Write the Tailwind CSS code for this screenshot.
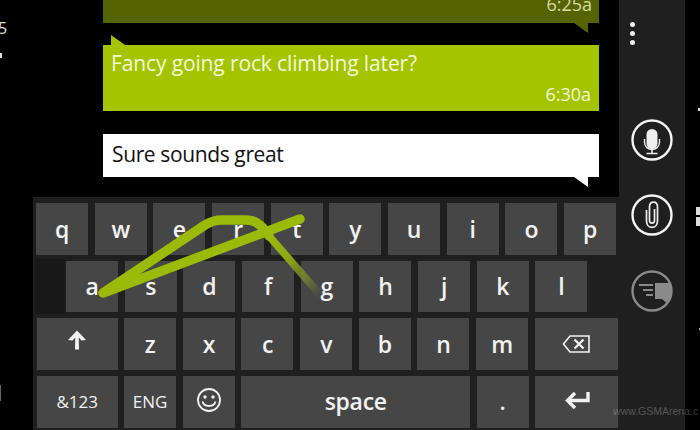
<!DOCTYPE html>
<html lang="en">
<head>
  <meta charset="UTF-8">
  <title>Messaging keyboard</title>
  <script src="https://cdn.jsdelivr.net/npm/@tailwindcss/browser@4"></script>
</head>
<body class="bg-black">
  <div class="relative flex w-[700px] h-[430px] overflow-hidden bg-black text-white font-['Open_Sans',sans-serif]">

    <!-- conversation and keyboard -->
    <div class="flex flex-col w-[619px]">
      <div class="flex flex-col h-[197px] pl-[103px] pr-[20px]">
        <div class="flex justify-end items-end h-[23px] px-[7px] pb-[10px] bg-[#556400] text-[#d5daa8] text-[18px] leading-[17px]">6:25a</div>
        <svg class="block shrink-0 self-start ml-[471px]" width="14" height="10"><polygon points="0,0 14,10 14,0" fill="#556400"/></svg>
        <svg class="block shrink-0 mt-[2px] ml-[8px]" width="14" height="10"><polygon points="0,0 0,10 14,10" fill="#a4c400"/></svg>
        <div class="flex flex-col justify-between h-[66px] px-[8px] pt-[3px] pb-[7px] bg-[#a4c400] text-[#f3f7dc]">
          <div class="text-[21px] leading-[30px] tracking-[-0.13px]">Fancy going rock climbing later?</div>
          <div class="text-right text-[18px] leading-[20px]">6:30a</div>
        </div>
        <div class="flex items-center h-[43px] mt-[23px] px-[9px] pb-[4px] bg-white text-[#111] text-[21px] leading-[30px] tracking-[-0.38px]">Sure sounds great</div>
        <svg class="block shrink-0 ml-[471px]" width="14" height="10"><polygon points="0,0 14,10 14,0" fill="#fff"/></svg>
      </div>

      <div class="flex flex-col gap-[6px] h-[233px] ml-[33px] pt-[6px] bg-[#1f1f1f] text-[23px] font-semibold tracking-[-0.3px] text-[#f2f2f2]">
        <div class="flex gap-[6.67px] pl-[3px] h-[51.5px]">
          <div class="flex items-center justify-center w-[52px] bg-[#464646]">q</div>
          <div class="flex items-center justify-center w-[52px] bg-[#464646]">w</div>
          <div class="flex items-center justify-center w-[52px] bg-[#464646]">e</div>
          <div class="flex items-center justify-center w-[52px] bg-[#464646]">r</div>
          <div class="flex items-center justify-center w-[52px] bg-[#464646]">t</div>
          <div class="flex items-center justify-center w-[52px] bg-[#464646]">y</div>
          <div class="flex items-center justify-center w-[52px] bg-[#464646]">u</div>
          <div class="flex items-center justify-center w-[52px] bg-[#464646]">i</div>
          <div class="flex items-center justify-center w-[52px] bg-[#464646]">o</div>
          <div class="flex items-center justify-center w-[52px] bg-[#464646]">p</div>
        </div>
        <div class="flex gap-[6.67px] pl-[2px] h-[51.5px]">
          <div class="w-[30px] -my-[2px] -mr-[5.67px] bg-[#181818]"></div>
          <div class="flex items-center justify-center w-[52px] bg-[#464646]">a</div>
          <div class="flex items-center justify-center w-[52px] bg-[#464646]">s</div>
          <div class="flex items-center justify-center w-[52px] bg-[#464646]">d</div>
          <div class="flex items-center justify-center w-[52px] bg-[#464646]">f</div>
          <div class="flex items-center justify-center w-[52px] bg-[#464646]">g</div>
          <div class="flex items-center justify-center w-[52px] bg-[#464646]">h</div>
          <div class="flex items-center justify-center w-[52px] bg-[#464646]">j</div>
          <div class="flex items-center justify-center w-[52px] bg-[#464646]">k</div>
          <div class="flex items-center justify-center w-[52px] bg-[#464646]">l</div>
        </div>
        <div class="flex gap-[6.67px] pl-[4px] h-[51.5px]">
          <div class="flex items-center justify-center w-[80.5px] bg-[#464646]">
            <svg class="-mt-[8px]" width="20" height="20" viewBox="0 0 20 20"><path d="M10 .5 L19 10 L14.5 10.5 L11.8 7.5 L12 19.5 L8 19.5 L8.2 7.5 L5.5 10.5 L1 10 Z" fill="#f2f2f2"/></svg>
          </div>
          <div class="flex items-center justify-center w-[52px] bg-[#464646]">z</div>
          <div class="flex items-center justify-center w-[52px] bg-[#464646]">x</div>
          <div class="flex items-center justify-center w-[52px] bg-[#464646]">c</div>
          <div class="flex items-center justify-center w-[52px] bg-[#464646]">v</div>
          <div class="flex items-center justify-center w-[52px] bg-[#464646]">b</div>
          <div class="flex items-center justify-center w-[52px] bg-[#464646]">n</div>
          <div class="flex items-center justify-center w-[52px] bg-[#464646]">m</div>
          <div class="flex items-center justify-center w-[83px] bg-[#464646]">
            <svg width="28" height="20" viewBox="0 0 28 20" fill="none" stroke="#f2f2f2"><path d="M8 2 H27 V18 H8 L1.5 10 Z" stroke-width="1.6"/><path d="M12.5 5.5 L21.5 14.5 M21.5 5.5 L12.5 14.5" stroke-width="2.2"/></svg>
          </div>
        </div>
        <div class="flex gap-[6.67px] pl-[4px] h-[52px]">
          <div class="flex items-center justify-center w-[80.5px] bg-[#464646] text-[17px] font-medium tracking-normal">&amp;123</div>
          <div class="flex items-center justify-center w-[52px] bg-[#464646] text-[17px] font-medium tracking-normal">ENG</div>
          <div class="flex items-center justify-center w-[52px] bg-[#464646]">
            <svg class="-mt-[4px]" width="26" height="26" viewBox="0 0 26 26" fill="none" stroke="#f2f2f2" stroke-width="1.8"><circle cx="13" cy="13" r="11"/><circle cx="9" cy="10" r="1.7" fill="#f2f2f2" stroke="none"/><circle cx="17" cy="10" r="1.7" fill="#f2f2f2" stroke="none"/><path d="M6.5 14.5 C8 20.5 18 20.5 19.5 14.5"/></svg>
          </div>
          <div class="flex items-center justify-center w-[228.5px] bg-[#464646]">space</div>
          <div class="flex items-center justify-center w-[52px] bg-[#464646]">.</div>
          <div class="flex items-center justify-center w-[83px] bg-[#464646]">
            <svg class="-mt-[4px]" width="26" height="20" viewBox="0 0 26 20" fill="none" stroke="#f2f2f2" stroke-width="3.4"><path d="M24 2 V10.5 H5"/><path d="M11 3 L3.5 10.5 L11 18"/></svg>
          </div>
        </div>
      </div>
    </div>

    <!-- side actions -->
    <div class="flex flex-col items-center w-[66px] bg-[#1f1f1f]">
      <div class="flex flex-col gap-[4px] self-start ml-[11px] mt-[22px]">
        <div class="size-[5px] rounded-full bg-[#eee]"></div>
        <div class="size-[5px] rounded-full bg-[#eee]"></div>
        <div class="size-[5px] rounded-full bg-[#eee]"></div>
      </div>
      <svg class="mt-[74px]" width="42" height="42" viewBox="0 0 42 42" fill="none">
        <circle cx="21" cy="21" r="19.5" stroke="#f5f5f5" stroke-width="2.4"/>
        <rect x="15.5" y="10" width="11" height="20" rx="5.5" fill="#eee"/>
        <path d="M13.5 20 V23 C13.5 33 28.5 33 28.5 23 V20" stroke="#eee" stroke-width="1.4"/>
        <path d="M21 31 V34 M15.5 34.5 H26.5" stroke="#eee" stroke-width="1.6"/>
      </svg>
      <svg class="mt-[33px]" width="42" height="42" viewBox="0 0 42 42" fill="none">
        <circle cx="21" cy="21" r="19.5" stroke="#f5f5f5" stroke-width="2.4"/>
        <path d="M15.5 16 V27 C15.5 35.5 26.5 35.5 26.5 27 V13 C26.5 6.5 18.5 6.5 18.5 13 V26.5 C18.5 30 23.5 30 23.5 26.5 V15" stroke="#eee" stroke-width="1.7"/>
      </svg>
      <svg class="mt-[34px]" width="42" height="42" viewBox="0 0 42 42" fill="none">
        <circle cx="21" cy="21" r="19.5" stroke="#8a8a8a" stroke-width="2.4"/>
        <path d="M24 13 H40 V27 L36.5 31 V34 L31 29 H24 Z" fill="#8a8a8a"/>
        <path d="M8 15 H22 M12 20 H22 M15 25 H22" stroke="#8a8a8a" stroke-width="2"/>
      </svg>
    </div>

    <!-- swipe trail drawn over the keys -->
    <svg class="absolute left-0 top-0 pointer-events-none" width="700" height="430" fill="none" stroke-linecap="round" stroke-linejoin="round">
      <defs>
        <linearGradient id="fade" gradientUnits="userSpaceOnUse" x1="269" y1="236" x2="322" y2="297">
          <stop offset="0" stop-color="#9cba0a"/>
          <stop offset="0.35" stop-color="#8fa916"/>
          <stop offset="0.7" stop-color="#7f8f2c" stop-opacity="0.7"/>
          <stop offset="1" stop-color="#6a7140" stop-opacity="0"/>
        </linearGradient>
      </defs>
      <path d="M269 236 L322 297" stroke="url(#fade)" stroke-width="7.5"/>
      <path d="M300 219 L103 293 L205 225 Q213 220 222 220 L246 220 Q256 220 263 228 L269 236" stroke="#9cba0a" stroke-width="9.5"/>
    </svg>

    <!-- edges of the neighbouring screen -->
    <div class="absolute left-0 top-[17px] -ml-[2px] text-[#ddd] text-[16px] leading-[22px]">5</div>
    <div class="absolute left-0 top-[53px] w-[2px] h-[5px] bg-[#ddd]"></div>
    <div class="absolute left-0 top-[385px] w-[1px] h-[16px] bg-[#666]"></div>
    <div class="absolute right-0 top-[108px] w-[2px] h-[3px] bg-[#ddd]"></div>
    <div class="absolute right-0 top-[207px] w-[4px] h-[8px] bg-[#ddd]"></div>
    <div class="absolute right-0 top-[217px] w-[4px] h-[9px] bg-[#ddd]"></div>
    <div class="absolute right-0 top-[328px] w-[1px] h-[2px] bg-[#aaa]"></div>

    <div class="absolute left-[613px] top-[403px] text-[10.5px] leading-[16px] whitespace-nowrap text-white/25 font-['Liberation_Sans',sans-serif]">www.GSMArena.c</div>
  </div>
</body>
</html>
